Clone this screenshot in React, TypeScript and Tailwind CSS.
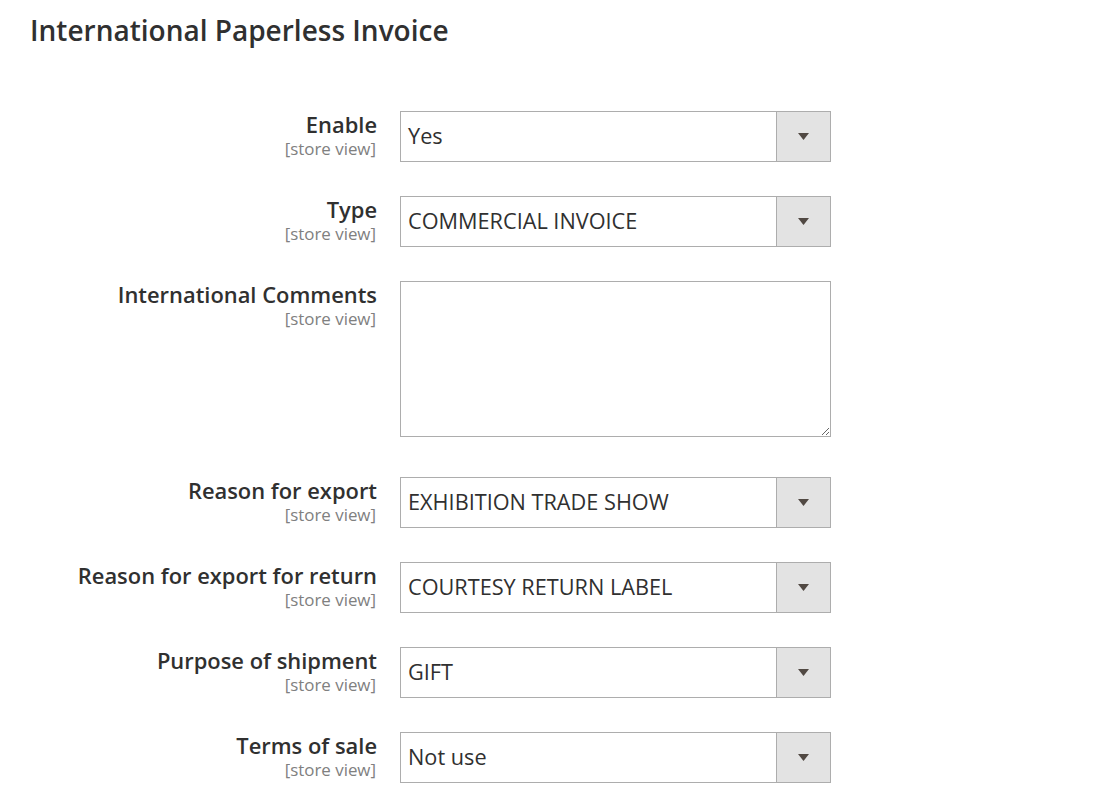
import React from 'react';

const fields: { label: string; value?: string; textarea?: boolean }[] = [
  { label: 'Enable', value: 'Yes' },
  { label: 'Type', value: 'COMMERCIAL INVOICE' },
  { label: 'International Comments', textarea: true },
  { label: 'Reason for export', value: 'EXHIBITION TRADE SHOW' },
  { label: 'Reason for export for return', value: 'COURTESY RETURN LABEL' },
  { label: 'Purpose of shipment', value: 'GIFT' },
  { label: 'Terms of sale', value: 'Not use' },
];

function FakeSelect({ value }: { value: string }) {
  return (
    <div className="flex h-[51px] w-[431px] border border-[#adadad] bg-white">
      <div className="flex flex-1 items-center pl-[7px] text-[21.7px] text-[#303030]">{value}</div>
      <div className="flex w-[54px] items-center justify-center border-l border-[#adadad] bg-[#e3e3e3]">
        <svg width="11" height="7" viewBox="0 0 11 7">
          <path d="M0 0h11L5.5 7z" fill="#514943" />
        </svg>
      </div>
    </div>
  );
}

export default function App() {
  return (
    <div className="min-h-[799px] bg-white font-['Open_Sans',sans-serif] text-[#303030]">
      <h1 className="pl-[30px] pt-[10px] text-[28px] leading-[40px] font-semibold text-[#303030]">
        International Paperless Invoice
      </h1>

      <div className="mt-[61px] flex flex-col">
        {fields.map((f) => (
          <div
            key={f.label}
            className={`flex ${f.textarea ? 'mb-[40px]' : 'mb-[34px]'}`}
          >
            <div className="w-[377px] text-right">
              <div className="text-[21.9px] leading-[28px] font-semibold text-[#303030]">{f.label}</div>
              <div className="mr-[1px] text-[16.9px] leading-[20px] text-[#808080]">[store view]</div>
            </div>
            <div className="ml-[23px]">
              {f.textarea ? (
                <textarea className="block h-[156px] w-[431px] border border-[#adadad] bg-white outline-none" />
              ) : (
                <FakeSelect value={f.value ?? ''} />
              )}
            </div>
          </div>
        ))}
      </div>
    </div>
  );
}
